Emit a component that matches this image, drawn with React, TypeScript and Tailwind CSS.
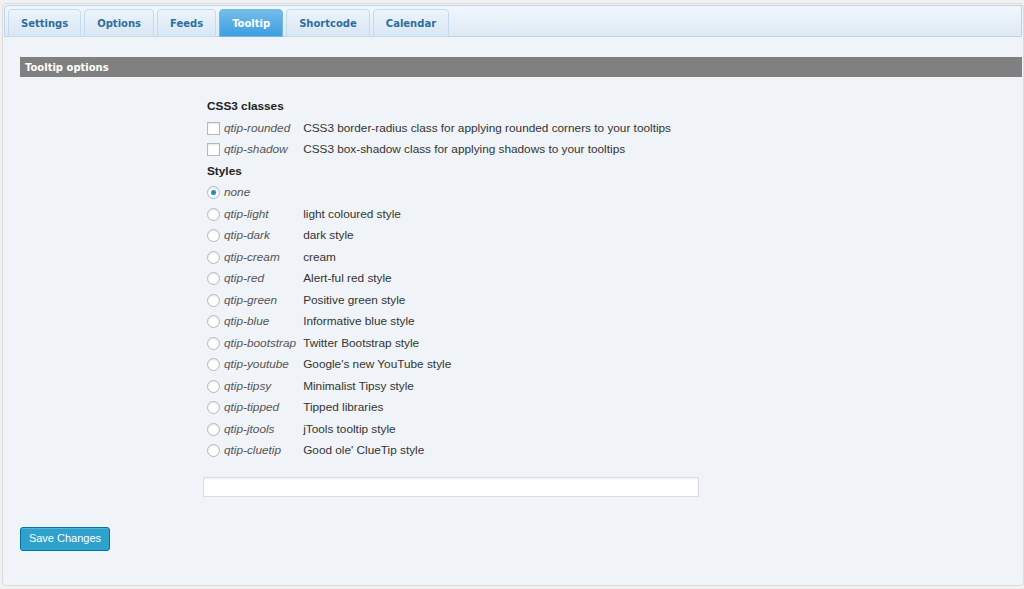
import React, { useState } from "react";

const tabs = ["Settings", "Options", "Feeds", "Tooltip", "Shortcode", "Calendar"];

const css3Classes = [
  { name: "qtip-rounded", desc: "CSS3 border-radius class for applying rounded corners to your tooltips" },
  { name: "qtip-shadow", desc: "CSS3 box-shadow class for applying shadows to your tooltips" },
];

const styles = [
  { name: "none", desc: "" },
  { name: "qtip-light", desc: "light coloured style" },
  { name: "qtip-dark", desc: "dark style" },
  { name: "qtip-cream", desc: "cream" },
  { name: "qtip-red", desc: "Alert-ful red style" },
  { name: "qtip-green", desc: "Positive green style" },
  { name: "qtip-blue", desc: "Informative blue style" },
  { name: "qtip-bootstrap", desc: "Twitter Bootstrap style" },
  { name: "qtip-youtube", desc: "Google's new YouTube style" },
  { name: "qtip-tipsy", desc: "Minimalist Tipsy style" },
  { name: "qtip-tipped", desc: "Tipped libraries" },
  { name: "qtip-jtools", desc: "jTools tooltip style" },
  { name: "qtip-cluetip", desc: "Good ole' ClueTip style" },
];

function Checkbox({ checked, onClick }: { checked: boolean; onClick: () => void }) {
  return (
    <span
      onClick={onClick}
      className="w-[13px] h-[13px] border border-[#b4b9be] bg-white shadow-[inset_0_1px_2px_rgba(0,0,0,0.1)] flex items-center justify-center text-[10px] text-[#1e8cbe] cursor-pointer"
    >
      {checked ? "✓" : ""}
    </span>
  );
}

function Radio({ checked, onClick }: { checked: boolean; onClick: () => void }) {
  return (
    <span
      onClick={onClick}
      className="w-[13px] h-[13px] rounded-full border border-[#b4b9be] bg-white shadow-[inset_0_1px_2px_rgba(0,0,0,0.1)] flex items-center justify-center cursor-pointer"
    >
      {checked && <span className="w-[5px] h-[5px] rounded-full bg-[#1e8cbe]" />}
    </span>
  );
}

export default function App() {
  const [active, setActive] = useState("Tooltip");
  const [classes, setClasses] = useState<{ [k: string]: boolean }>({});
  const [style, setStyle] = useState("none");

  return (
    <div className="min-h-[589px] bg-[#f1f1f1] pt-[3px] pl-[2px] font-['Liberation_Sans',Arial,sans-serif] text-[11.8px] text-[#333]">
      <div className="h-[583px] border border-[#dcdcdc] rounded-[4px] bg-[#f0f3f7] p-px">
        {/* Tabs */}
        <div className="h-[32px] flex items-end gap-[3px] pl-[3px] border border-[#b9d4ec] rounded-tl-[4px] bg-gradient-to-b from-[#f2f7fc] to-[#dde9f5]">
          {tabs.map(t => (
            <button
              key={t}
              onClick={() => setActive(t)}
              className={
                t === active
                  ? "h-[28px] -mb-px px-[12px] rounded-t-[4px] border border-[#79b7e7] bg-gradient-to-b from-[#73bcec] to-[#3c9edf] text-white font-['DejaVu_Sans',sans-serif] font-bold text-[10px]"
                  : "h-[28px] -mb-px px-[12px] rounded-t-[4px] border border-[#c5dbec] bg-gradient-to-b from-[#edf4fb] to-[#d8e7f5] text-[#2e6e9e] font-['DejaVu_Sans',sans-serif] font-bold text-[10px]"
              }
            >
              {t}
            </button>
          ))}
        </div>

        <div className="pt-[20px] pl-[16px]">
          <div className="h-[20px] bg-[#808080] pl-[5px] flex items-center text-white font-['DejaVu_Sans',sans-serif] font-bold text-[10px]">
            Tooltip options
          </div>

          <div className="pl-[187px] pt-[19px]">
            <div className="grid grid-cols-[auto_1fr] leading-[21.5px]">
              <div className="col-span-2 font-bold text-[#222]">CSS3 classes</div>
              {css3Classes.map(c => (
                <React.Fragment key={c.name}>
                  <div className="flex items-center gap-[4px] pr-[7px]">
                    <Checkbox
                      checked={!!classes[c.name]}
                      onClick={() => setClasses(p => ({ ...p, [c.name]: !p[c.name] }))}
                    />
                    <span className="italic text-[#555]">{c.name}</span>
                  </div>
                  <div>{c.desc}</div>
                </React.Fragment>
              ))}
              <div className="col-span-2 font-bold text-[#222]">Styles</div>
              {styles.map(s => (
                <React.Fragment key={s.name}>
                  <div className="flex items-center gap-[4px] pr-[7px]">
                    <Radio checked={style === s.name} onClick={() => setStyle(s.name)} />
                    <span className="italic text-[#555]">{s.name}</span>
                  </div>
                  <div>{s.desc}</div>
                </React.Fragment>
              ))}
            </div>

            <input
              type="text"
              className="block mt-[15px] -ml-[4px] w-[496px] h-[20px] bg-white border border-[#dddddd] shadow-[inset_0_1px_2px_rgba(0,0,0,0.07)] outline-none px-1"
            />
          </div>

          <div className="pt-[30px]">
            <button className="h-[24px] w-[90px] rounded-[3px] border border-[#0074a2] bg-[#2ea2cc] text-white text-[11px] shadow-[inset_0_1px_0_rgba(120,200,230,0.5)]">
              Save Changes
            </button>
          </div>
        </div>
      </div>
    </div>
  );
}
